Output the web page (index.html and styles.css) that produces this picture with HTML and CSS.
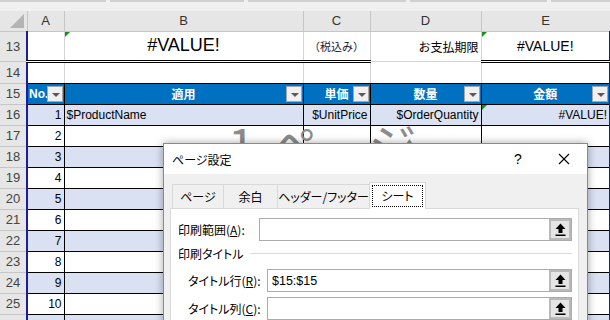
FILE: index.html
```html
<!DOCTYPE html>
<html lang="ja">
<head>
  <meta charset="UTF-8" />
  <title>ページ設定</title>
  <link rel="stylesheet" href="styles.css">
</head>
<body>
<div class="app">
  <div class="topbar"><span style="width:107px"></span><span style="width:136px"></span><span style="width:160px"></span><span style="width:138px"></span><span style="width:60px"></span></div>

  <table class="sheet">
    <colgroup>
      <col style="width:27px"><col style="width:37px"><col style="width:239px"><col style="width:67px"><col style="width:111px"><col style="width:129px">
    </colgroup>
    <tr class="col-heads">
      <th class="corner"><span class="tri"></span></th><th>A</th><th>B</th><th>C</th><th>D</th><th>E</th>
    </tr>
    <tr class="r13">
      <th>13</th>
      <td class="ca"></td>
      <td class="big center flag">#VALUE!</td>
      <td class="small center">（税込み）</td>
      <td class="right single">お支払期限</td>
      <td class="mid center flag ce">#VALUE!</td>
    </tr>
    <tr class="r14">
      <th>14</th><td class="ca"></td><td></td><td></td><td></td><td class="ce"></td>
    </tr>
    <tr class="r15">
      <th>15</th>
      <td class="ca left">No.<span class="fbtn"></span></td>
      <td class="center">適用<span class="fbtn"></span></td>
      <td class="center">単価<span class="fbtn"></span></td>
      <td class="center">数量<span class="fbtn"></span></td>
      <td class="center ce">金額<span class="fbtn"></span></td>
    </tr>
    <tr class="row band">
      <th>16</th><td class="ca right">1</td><td>$ProductName</td><td class="right">$UnitPrice</td><td class="right">$OrderQuantity</td><td class="right flag ce">#VALUE!</td>
    </tr>
    <tr class="row"><th>17</th><td class="ca right">2</td><td></td><td></td><td></td><td class="ce"></td></tr>
    <tr class="row band"><th>18</th><td class="ca right">3</td><td></td><td></td><td></td><td class="ce"></td></tr>
    <tr class="row"><th>19</th><td class="ca right">4</td><td></td><td></td><td></td><td class="ce"></td></tr>
    <tr class="row band"><th>20</th><td class="ca right">5</td><td></td><td></td><td></td><td class="ce"></td></tr>
    <tr class="row"><th>21</th><td class="ca right">6</td><td></td><td></td><td></td><td class="ce"></td></tr>
    <tr class="row band"><th>22</th><td class="ca right">7</td><td></td><td></td><td></td><td class="ce"></td></tr>
    <tr class="row"><th>23</th><td class="ca right">8</td><td></td><td></td><td></td><td class="ce"></td></tr>
    <tr class="row band"><th>24</th><td class="ca right">9</td><td></td><td></td><td></td><td class="ce"></td></tr>
    <tr class="row"><th>25</th><td class="ca right">10</td><td></td><td></td><td></td><td class="ce"></td></tr>
    <tr class="row band"><th>26</th><td class="ca right">11</td><td></td><td></td><td></td><td class="ce"></td></tr>
  </table>

  <div class="watermark">1 ページ</div>

  <!-- page setup dialog -->
  <div class="dialog">
    <div class="dlg-title">
      <span class="dlg-name">ページ設定</span>
      <span class="dlg-help">?</span>
      <span class="dlg-close">
        <svg width="12" height="12" viewBox="0 0 12 12"><path d="M1 1 L11 11 M11 1 L1 11" stroke="#000" stroke-width="1.1" fill="none"/></svg>
      </span>
    </div>
    <div class="dlg-body">
      <div class="tabs">
        <div class="tab">ページ</div>
        <div class="tab">余白</div>
        <div class="tab">ヘッダー/フッター</div>
        <div class="tab active"><span class="focus">シート</span></div>
      </div>
      <div class="panel">
        <div class="field">
          <label>印刷範囲(<u>A</u>):</label>
          <div class="input"><span class="val"></span><span class="pick"><svg width="11" height="13" viewBox="0 0 11 13"><path d="M5.5 0.5 L0.5 6 H3.5 V10 H7.5 V6 H10.5 Z" fill="#000"/><rect x="0.5" y="11.5" width="10" height="1.5" fill="#000"/></svg></span></div>
        </div>
        <div class="group"><span>印刷タイトル</span><span class="rule"></span></div>
        <div class="field indent">
          <label>タイトル行(<u>R</u>):</label>
          <div class="input"><span class="val">$15:$15</span><span class="pick"><svg width="11" height="13" viewBox="0 0 11 13"><path d="M5.5 0.5 L0.5 6 H3.5 V10 H7.5 V6 H10.5 Z" fill="#000"/><rect x="0.5" y="11.5" width="10" height="1.5" fill="#000"/></svg></span></div>
        </div>
        <div class="field indent">
          <label>タイトル列(<u>C</u>):</label>
          <div class="input"><span class="val"></span><span class="pick"><svg width="11" height="13" viewBox="0 0 11 13"><path d="M5.5 0.5 L0.5 6 H3.5 V10 H7.5 V6 H10.5 Z" fill="#000"/><rect x="0.5" y="11.5" width="10" height="1.5" fill="#000"/></svg></span></div>
        </div>
      </div>
    </div>
  </div>
</div>
</body>
</html>
```

FILE: styles.css
```css
* {
  box-sizing: border-box;
}
body {
  margin: 0;
  font-family: "Liberation Sans", "Noto Sans CJK JP", sans-serif;
  font-size: 12px;
  color: #000;
  background: #fff;
}
.app {
  position: relative;
  width: 610px;
  height: 320px;
  overflow: hidden;
}
.topbar {
  height: 11px;
  background: #f0f0f0;
  display: flex;
  gap: 4px;
}
.topbar span {
  height: 2px;
  background: #d0d0d0;
}

/* sheet grid */
.sheet {
  border-collapse: collapse;
  table-layout: fixed;
  width: 610px;
}
.sheet td,
.sheet th {
  padding: 0 2px;
  white-space: nowrap;
  overflow: hidden;
}
.sheet th {
  background: #e6e6e6;
  color: #444;
  font-weight: normal;
  font-size: 13px;
  text-align: center;
  border-bottom: 1px solid #c6c6c6;
  border-right: 1px solid #c6c6c6;
}
.col-heads th {
  height: 20px;
  color: #333;
}
.corner {
  position: relative;
}
.corner .tri {
  position: absolute;
  right: 3px;
  bottom: 3px;
  border-left: 14px solid transparent;
  border-bottom: 14px solid #b4b4b4;
}
.center { text-align: center; }
.right { text-align: right; }
.left { text-align: left; }

.r13 td {
  height: 30px;
  border-right: 1px solid #d4d4d4;
  border-bottom: 3px double #000;
}
.r13 td.single {
  border-bottom: 1px solid #d4d4d4;
}
.r13 .big {
  font-size: 18px;
}
.r13 .mid {
  font-size: 14px;
}
.r13 .small {
  font-size: 11px;
  color: #223;
}
.r14 td {
  height: 22px;
  border-right: 1px solid #d4d4d4;
  border-bottom: 1px solid #000;
}
.r15 td {
  height: 21px;
  position: relative;
  background: #0070c0;
  color: #fff;
  font-weight: bold;
  border: 1px solid #000;
}
.r15 td.ca {
  overflow: visible;
  padding-left: 1px;
}
.fbtn {
  position: absolute;
  right: 1px;
  top: 2px;
  width: 16px;
  height: 16px;
  background: #f0f0f0;
  border: 1px solid #a6a6a6;
}
.fbtn::after {
  content: "";
  position: absolute;
  left: 4px;
  top: 6px;
  border-left: 4px solid transparent;
  border-right: 4px solid transparent;
  border-top: 4px solid #5a5a5a;
}
.row td {
  height: 21px;
  border: 1px solid #000;
}
.row.band td {
  background: #d9e1f2;
}
.sheet td.ca {
  border-left: 2px solid #1c1ca0;
}
.sheet td.ce {
  border-right: 2px solid #1c1ca0;
}
.flag {
  position: relative;
}
.flag::before {
  content: "";
  position: absolute;
  left: 0;
  top: 0;
  border-top: 5px solid #1f8a1f;
  border-right: 5px solid transparent;
}

.watermark {
  position: absolute;
  left: 228px;
  top: 124px;
  font-family: "Noto Sans CJK JP", sans-serif;
  font-size: 48px;
  line-height: 0.8;
  color: #8c8c8c;
  letter-spacing: 2px;
}

/* dialog */
.dialog {
  position: absolute;
  left: 163px;
  top: 143px;
  width: 425px;
  height: 200px;
  background: #f0f0f0;
  border: 1px solid #8a8a8a;
  box-shadow: 0 0 8px rgba(0, 0, 0, 0.35);
  font-family: "Noto Sans CJK JP", sans-serif;
  font-feature-settings: "palt";
}
.dlg-title {
  height: 30px;
  background: #fff;
  display: flex;
  align-items: center;
  padding-left: 8px;
}
.dlg-name {
  flex: 1;
}
.dlg-help {
  font-family: "Liberation Sans", sans-serif;
  font-size: 14px;
  width: 41px;
}
.dlg-close {
  width: 32px;
  display: flex;
  align-items: center;
  padding-left: 3px;
}
.dlg-body {
  padding: 9px 8px 0 6px;
}
.tabs {
  display: flex;
  height: 25px;
  padding-left: 2px;
  align-items: flex-end;
}
.tab {
  height: 24px;
  display: flex;
  align-items: center;
  justify-content: center;
  white-space: nowrap;
  border: 1px solid #d9d9d9;
  border-bottom: none;
  margin-right: -1px;
}
.tab:nth-child(1) { width: 52px; }
.tab:nth-child(2) { width: 55px; }
.tab:nth-child(3) { width: 93px; }
.tab.active {
  width: 57px;
  height: 27px;
  margin-bottom: -1px;
  background: #fff;
  position: relative;
  z-index: 1;
}
.focus {
  border: 1px dotted #000;
  padding: 1px 8px;
  line-height: 18px;
}
.panel {
  background: #fff;
  border: 1px solid #d9d9d9;
  height: 130px;
  padding: 9px 6px 0 7px;
}
.field {
  display: flex;
  align-items: center;
  height: 23px;
}
.field label {
  width: 81px;
}
.field.indent {
  padding-left: 10px;
  margin-top: 5px;
}
.field.indent label {
  width: 79px;
}
.input {
  flex: 1;
  height: 23px;
  border: 1px solid #ababab;
  display: flex;
  align-items: center;
}
.val {
  flex: 1;
  padding-left: 4px;
  font-family: "Liberation Sans", sans-serif;
  font-size: 12.5px;
}
.pick {
  width: 22px;
  height: 21px;
  border: 2px solid #b9b9b9;
  background: #e5e5e5;
  display: flex;
  align-items: center;
  justify-content: center;
}
.group {
  display: flex;
  align-items: center;
  height: 22px;
  margin-top: 1px;
}
.group .rule {
  flex: 1;
  margin-left: 6px;
  border-top: 1px solid #dcdcdc;
}
```
